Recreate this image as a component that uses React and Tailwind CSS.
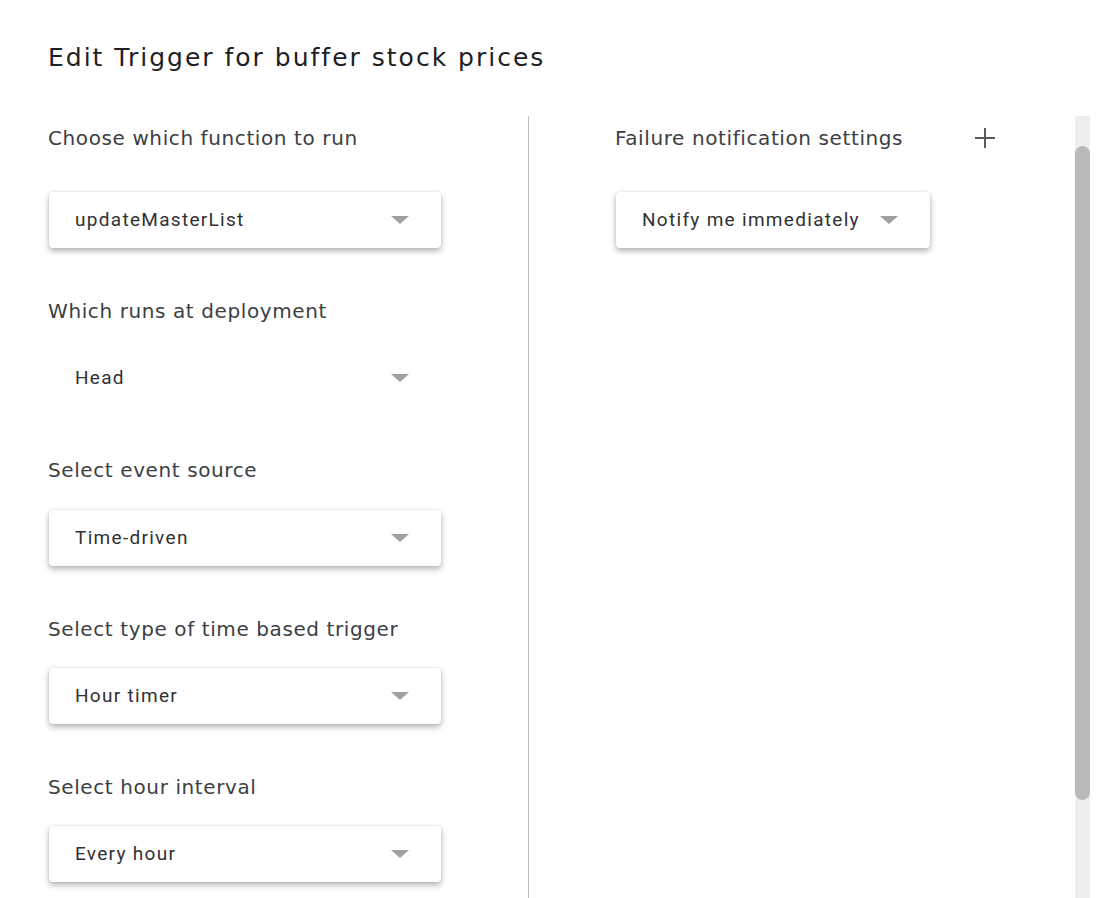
import React from "react";

const Caret = () => (
  <svg width="18" height="8" viewBox="0 0 18 8" className="shrink-0">
    <path d="M0 0 L18 0 L9 8 Z" fill="#a0a0a0" />
  </svg>
);

function Dropdown({ value, flat, className = "" }) {
  return (
    <div
      className={
        "flex items-center h-[56px] rounded-[4px] bg-white " +
        (flat ? "" : "shadow-[0_3px_6px_rgba(0,0,0,0.3),0_0_2px_rgba(0,0,0,0.12)] ") +
        className
      }
    >
      <span className="pl-[26px] flex-1 text-[19px] tracking-[1.3px] text-[#303134] font-['Roboto',sans-serif]">
        {value}
      </span>
      <Caret />
    </div>
  );
}

function Label({ children }) {
  return (
    <div className="text-[20px] leading-[26px] tracking-[0.6px] text-[#3c4043] font-['DejaVu_Sans',sans-serif]">
      {children}
    </div>
  );
}

export default function App() {
  return (
    <div className="w-[1112px] h-[898px] bg-white overflow-hidden font-['DejaVu_Sans',sans-serif]">
      <h1 className="pl-[48px] pt-[42px] text-[25px] leading-[32px] tracking-[2px] text-[#202124] font-['DejaVu_Sans',sans-serif]">
        Edit Trigger for buffer stock prices
      </h1>

      <div className="flex mt-[42px] h-[782px]">
        {/* left column */}
        <div className="w-[480px] pl-[48px] pt-[9px] shrink-0">
          <Label>Choose which function to run</Label>
          <Dropdown value="updateMasterList" className="mt-[41px] w-[392px] ml-[1px] [&>svg]:mr-[32px]" />

          <div className="mt-[50px]">
            <Label>Which runs at deployment</Label>
          </div>
          <Dropdown value="Head" flat className="mt-[26px] w-[392px] ml-[1px] [&>svg]:mr-[32px]" />

          <div className="mt-[51px]">
            <Label>Select event source</Label>
          </div>
          <Dropdown value="Time-driven" className="mt-[27px] w-[392px] ml-[1px] [&>svg]:mr-[32px]" />

          <div className="mt-[50px]">
            <Label>Select type of time based trigger</Label>
          </div>
          <Dropdown value="Hour timer" className="mt-[26px] w-[392px] ml-[1px] [&>svg]:mr-[32px]" />

          <div className="mt-[50px]">
            <Label>Select hour interval</Label>
          </div>
          <Dropdown value="Every hour" className="mt-[26px] w-[392px] ml-[1px] [&>svg]:mr-[32px]" />
        </div>

        {/* divider */}
        <div className="w-px bg-[#bdbdbd] ml-[48px] shrink-0" />

        {/* right column */}
        <div className="flex-1 pl-[86px] pt-[9px]">
          <div className="flex items-center w-[384px] justify-between">
            <Label>Failure notification settings</Label>
            <svg width="22" height="22" viewBox="0 0 22 22" className="mr-[3px]">
              <path d="M11 1 V21 M1 11 H21" stroke="#5a5a5a" strokeWidth="2" />
            </svg>
          </div>
          <Dropdown value="Notify me immediately" className="mt-[41px] w-[314px] ml-[1px] [&>svg]:mr-[32px] [&>span]:pr-[18px]" />
        </div>

        {/* scrollbar */}
        <div className="w-[15px] mr-[22px] bg-[#eeeeee] pt-[30px] pb-[98px] flex shrink-0">
          <div className="w-full flex-1 bg-[#b9b9b9] rounded-t-[8px] rounded-b-[8px]" />
        </div>
      </div>
    </div>
  );
}
